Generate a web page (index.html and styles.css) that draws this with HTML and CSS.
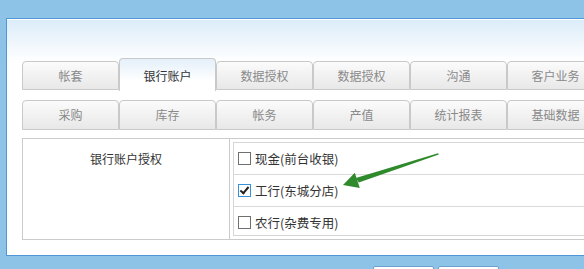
FILE: index.html
```html
<!DOCTYPE html>
<html lang="zh-CN">
<head>
    <meta charset="UTF-8">
    <meta name="viewport" content="width=device-width, initial-scale=1.0">
    <title>银行账户授权</title>
    <link rel="stylesheet" href="styles.css">
</head>
<body>
    <div class="panel">
        <div class="tabs">
            <div class="tab">帐套</div>
            <div class="tab active">银行账户</div>
            <div class="tab">数据授权</div>
            <div class="tab">数据授权</div>
            <div class="tab">沟通</div>
            <div class="tab">客户业务</div>
        </div>
        <div class="tabs second">
            <div class="tab">采购</div>
            <div class="tab">库存</div>
            <div class="tab">帐务</div>
            <div class="tab">产值</div>
            <div class="tab">统计报表</div>
            <div class="tab">基础数据</div>
        </div>
        <div class="grant">
            <div class="grant-label">银行账户授权</div>
            <div class="grant-body">
                <div class="options">
                    <label class="option"><span class="box"></span>现金(前台收银)</label>
                    <label class="option"><span class="box checked"></span>工行(东城分店)</label>
                    <label class="option"><span class="box"></span>农行(杂费专用)</label>
                </div>
            </div>
            <!-- annotation arrow pointing at the checked account -->
            <svg class="arrow" width="102" height="42" viewBox="0 0 102 42">
                <polygon points="98,3.3 98.8,4.6 18.8,32.6 15.8,28" fill="#2f8a2c"/>
                <polygon points="3,35 14.8,22.7 19.8,37.9" fill="#2f8a2c"/>
            </svg>
        </div>
    </div>
    <div class="footer">
        <div class="btn"></div>
        <div class="btn"></div>
    </div>
</body>
</html>
```

FILE: styles.css
```css
body {
    margin: 0;
    background-color: #8cc3e7;
    font-family: "Noto Sans CJK SC", "Liberation Sans", sans-serif;
    overflow: hidden;
    width: 584px;
    height: 269px;
}
.panel {
    margin: 18px 0 0 6px;
    width: 700px;
    height: 197px;
    border: 1px solid #4f97d5;
    border-right: none;
    box-shadow: inset 0 1px 0 #fff;
    background: linear-gradient(#dbecf9 1px, #eef6fc 22px, #fff 44px);
    padding: 39px 0 0 15px;
    position: relative;
}
.tabs {
    display: flex;
    height: 32px;
}
.tabs.second {
    margin-top: 10px;
    height: 30px;
}
.tab {
    box-sizing: border-box;
    flex: 0 0 97px;
    height: 29px;
    margin-top: 3px;
    border: 1px solid #c9c9c9;
    border-radius: 4px 4px 0 0;
    background: linear-gradient(#fbfbfb, #e8e8e8);
    color: #8a8a8a;
    font-size: 12px;
    line-height: 27px;
    text-align: center;
}
.tabs.second .tab {
    height: 30px;
    margin-top: 0;
    line-height: 28px;
}
.tab.active {
    height: 33px;
    margin-top: 0;
    border-bottom: none;
    background: linear-gradient(#e4f0fa, #fff 70%);
    color: #333;
    line-height: 34px;
}
.grant {
    display: flex;
    width: 600px;
    margin-top: 8px;
    height: 100px;
    border: 1px solid #cbcbcb;
    position: relative;
}
.grant-label {
    width: 206px;
    border-right: 1px solid #cbcbcb;
    text-align: center;
    font-size: 12px;
    color: #333;
    line-height: 20px;
    padding-top: 10px;
}
.grant-body {
    flex: 1;
    padding: 3px;
}
.options {
    border: 1px solid #d6d6d6;
    height: 92px;
}
.option {
    display: flex;
    align-items: center;
    height: 31px;
    padding-left: 4px;
    font-size: 12.5px;
    color: #333;
    border-bottom: 1px solid #dadada;
}
.option:last-child {
    border-bottom: none;
    height: 30px;
}
.box {
    box-sizing: border-box;
    width: 13px;
    height: 13px;
    border: 1px solid #707070;
    background: #fff;
    margin-right: 4px;
    position: relative;
}
.box.checked {
    border-color: #3392d9;
}
.box.checked::after {
    content: "";
    position: absolute;
    left: 3px;
    top: 0px;
    width: 3px;
    height: 7px;
    border: solid #222;
    border-width: 0 2px 2px 0;
    transform: rotate(40deg);
}
.arrow {
    position: absolute;
    left: 317px;
    top: 11px;
}
.footer {
    display: flex;
    gap: 4px;
    padding: 10px 0 0 373px;
}
.btn {
    width: 59px;
    height: 20px;
    background: #fff;
    border: 1px solid #6e9fcf;
    border-radius: 2px;
}
```
